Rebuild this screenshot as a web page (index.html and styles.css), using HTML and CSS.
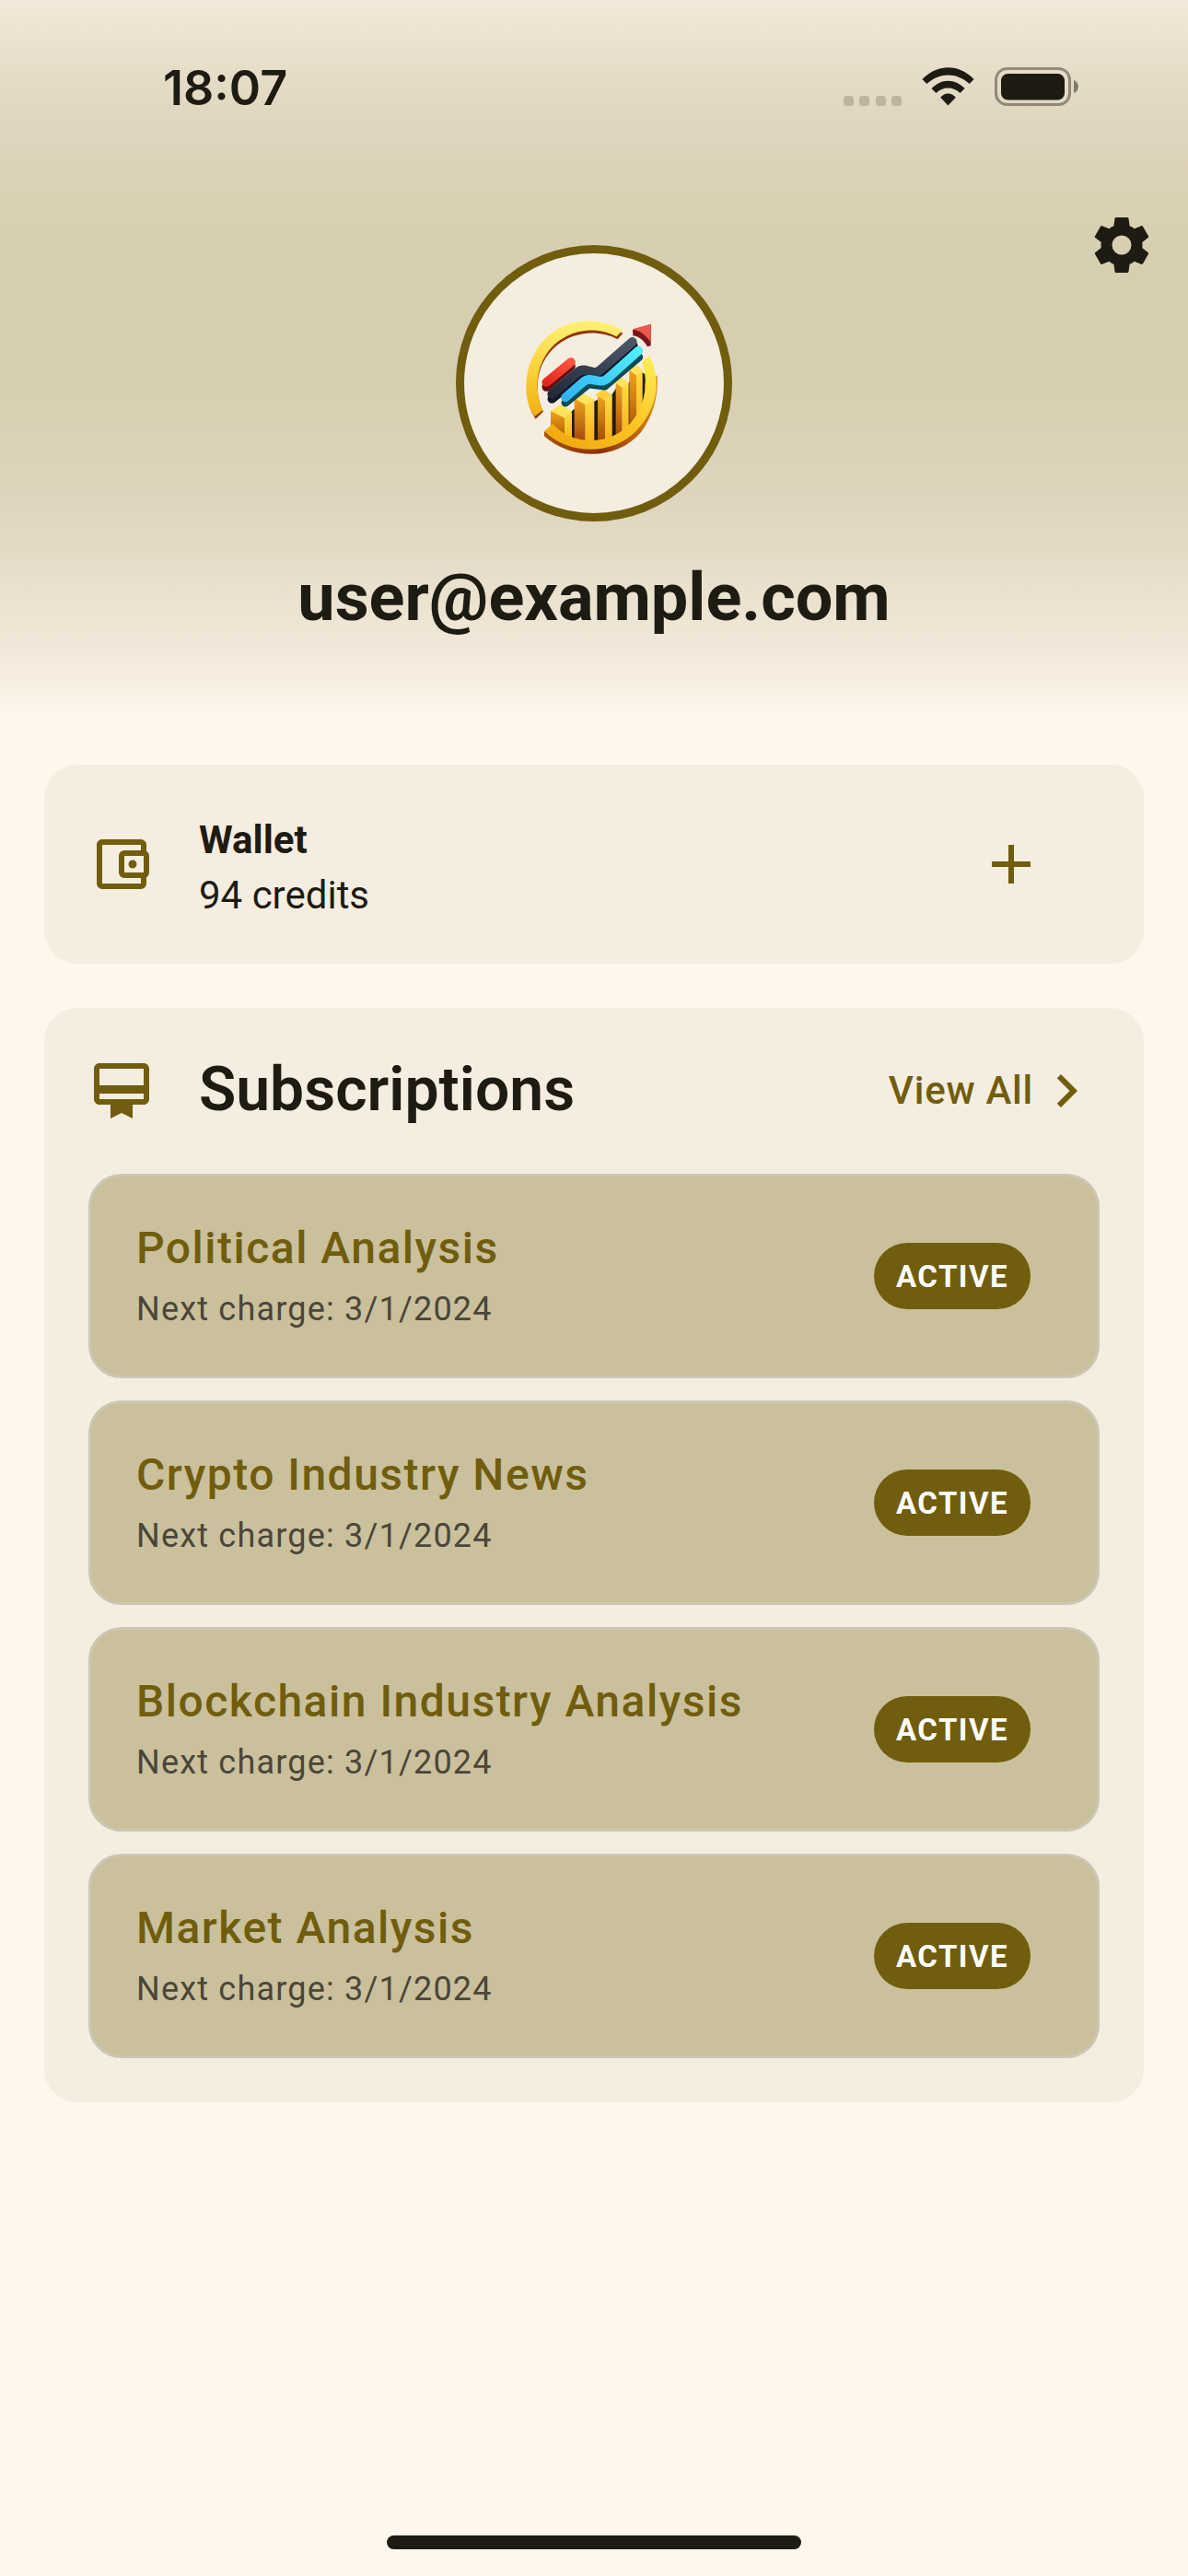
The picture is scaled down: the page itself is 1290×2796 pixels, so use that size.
FILE: index.html
```html
<!DOCTYPE html>
<html lang="en">
<head>
<meta charset="utf-8">
<title>Profile</title>
<link rel="stylesheet" href="styles.css">
</head>
<body>
<div class="screen">
  <header class="hero">
    <div class="status">
      <span class="clock">18:07</span>
      <div class="signals">
        <div class="dots"><i></i><i></i><i></i><i></i></div>
        <svg class="wifi" viewBox="0 0 170 124">
          <path d="M1 39C50 -12 120 -12 169 39L154 54C113 16 57 16 16 54Z"/>
          <path d="M31 69C63 36 107 36 139 69L124 84C102 62 68 62 46 84Z"/>
          <path d="M60 98C75 81 95 81 110 98L85 124Z"/>
        </svg>
        <svg class="battery" viewBox="0 0 92 42">
          <rect x="1.5" y="1.5" width="80" height="39" rx="12" fill="none" stroke="#1e1b13" stroke-opacity=".42" stroke-width="3"/>
          <rect x="7" y="7" width="69" height="28.5" rx="7.5" fill="#1e1b13"/>
          <path d="M86 14C92.500 16 92.500 26 86 28Z" fill="#1e1b13" opacity=".5"/>
        </svg>
      </div>
    </div>
    <div class="profile">
      <div class="avatar">
        <svg class="logo" viewBox="0 -24 630 624">
          <defs>
            <linearGradient id="ring" x1="0" y1="0" x2="0" y2="1"><stop offset="0" stop-color="#fff274"/><stop offset=".5" stop-color="#fbd13b"/><stop offset="1" stop-color="#f2b010"/></linearGradient>
            <linearGradient id="ring2" x1="1" y1="0" x2="0" y2="1"><stop offset="0" stop-color="#fff05a"/><stop offset=".45" stop-color="#fbc522"/><stop offset="1" stop-color="#efa50c"/></linearGradient>
            <linearGradient id="edge" x1="0" y1="0" x2="1" y2="0"><stop offset="0" stop-color="#a85408"/><stop offset=".5" stop-color="#8c2e05"/><stop offset="1" stop-color="#d98a0c"/></linearGradient>
            <linearGradient id="barL" x1="0" y1="0" x2="0" y2="1"><stop offset="0" stop-color="#f0a51a"/><stop offset="1" stop-color="#983a06"/></linearGradient>
            <linearGradient id="barR" x1="0" y1="0" x2="0" y2="1"><stop offset="0" stop-color="#ffdc42"/><stop offset="1" stop-color="#f5a911"/></linearGradient>
            <linearGradient id="navy" x1="1" y1="0" x2="0" y2="1"><stop offset="0" stop-color="#4c5669"/><stop offset="1" stop-color="#232b3b"/></linearGradient>
            <linearGradient id="cyan" x1="1" y1="0" x2="0" y2="1"><stop offset="0" stop-color="#52efff"/><stop offset="1" stop-color="#2fb4ee"/></linearGradient>
            <linearGradient id="red" x1="1" y1="0" x2="0" y2="1"><stop offset="0" stop-color="#fb5340"/><stop offset="1" stop-color="#e6261e"/></linearGradient>
            <clipPath id="disc"><path d="M90 200H500V300C500 400 425 478 310 478C250 478 205 455 168 422Z"/></clipPath>
          </defs>
          <path d="M409 125L392 145C330 112 245 118 186 172C128 226 116 310 150 380L125 404C85 350 85 240 140 168C200 90 310 65 409 125Z" fill="#8d3507"/>
          <path d="M408 116L388 136C330 103 245 108 186 162C128 216 116 306 148 376L121 396C82 340 84 240 135 168C195 85 305 58 408 116Z" fill="url(#ring)"/>
          <g clip-path="url(#disc)">
            <path d="M236 385L258 365V480H236ZM310 350L330 340V480H310ZM370 330L390 300V480H370ZM425 290L440 270V480H425ZM468 250L486 262V440H468Z" fill="#241b12"/>
            <path d="M174 378L219 400V500H174Z" fill="url(#barL)"/><path d="M219 400L243 380V500H219Z" fill="url(#barR)"/><path d="M174 378L206 357L243 380L219 400Z" fill="#ffe45c"/>
            <path d="M251 336L287 358V500H251Z" fill="url(#barL)"/><path d="M287 358L316 340V500H287Z" fill="url(#barR)"/><path d="M251 336L278 319L316 340L287 358Z" fill="#ffe45c"/>
            <path d="M327 326L351 344V500H327Z" fill="url(#barL)"/><path d="M351 344L374 326V500H351Z" fill="url(#barR)"/><path d="M318 326L345 307L374 326L351 344Z" fill="#ffd03c"/>
            <path d="M386 286L407 302V500H386Z" fill="url(#barL)"/><path d="M407 302L428 286V500H407Z" fill="url(#barR)"/><path d="M378 282L402 266L428 286L407 302Z" fill="#ffe45c"/>
            <path d="M430 244L453 262V500H430Z" fill="url(#barL)"/><path d="M453 262L473 242V500H453Z" fill="url(#barR)"/><path d="M424 240L446 224L473 242L453 262Z" fill="#ffe45c"/>
          </g>
          <path d="M153 444V460C240 540 390 540 468 448C524 372 524 290 520 262L480 290C500 400 400 500 290 485Z" fill="url(#edge)"/>
          <path d="M496 198L472 218C510 340 440 470 310 474C255 475 210 455 181 420L153 444C230 522 376 525 454 442C528 362 532 275 496 198Z" fill="url(#ring2)"/>
          <g fill="none" stroke-linejoin="round" stroke-linecap="round">
            <path d="M160 300L240 232" stroke="#611013" stroke-width="29"/>
            <path d="M160 285L240 219" stroke="url(#red)" stroke-width="29"/>
            <path d="M178 339L277 258L325 264L443 165" stroke="#101827" stroke-width="29"/>
            <path d="M178 323L262 252Q276 241 294 247L315 252Q326 253 335 245L440 153" stroke="url(#navy)" stroke-width="30"/>
            <path d="M222 351L297 290L350 297L461 203" stroke="#0b4c59" stroke-width="27"/>
            <path d="M222 334L280 284Q291 274 305 276L335 281Q348 282 360 272L460 182" stroke="url(#cyan)" stroke-width="29"/>
          </g>
          <path d="M441 113L501 95L500 166L489 169C477 148 463 136 442 133Z" fill="#7b151b"/>
          <path d="M441 112L501 95L499 154C485 132 467 118 441 112Z" fill="#ed594e"/>
        </svg>
      </div>
      <svg class="icon gear" viewBox="0 0 24 24"><path d="M12,15.5A3.5,3.5 0 0,1 8.5,12A3.5,3.5 0 0,1 12,8.5A3.5,3.5 0 0,1 15.5,12A3.5,3.5 0 0,1 12,15.5M19.43,12.97C19.47,12.65 19.5,12.33 19.5,12C19.5,11.67 19.47,11.34 19.43,11L21.54,9.37C21.73,9.22 21.78,8.95 21.66,8.73L19.66,5.27C19.54,5.05 19.27,4.96 19.05,5.05L16.56,6.05C16.04,5.66 15.5,5.32 14.87,5.07L14.5,2.42C14.46,2.18 14.25,2 14,2H10C9.75,2 9.54,2.18 9.5,2.42L9.13,5.07C8.5,5.32 7.96,5.66 7.44,6.05L4.95,5.05C4.73,4.96 4.46,5.05 4.34,5.27L2.34,8.73C2.21,8.95 2.27,9.22 2.46,9.37L4.57,11C4.53,11.34 4.5,11.67 4.5,12C4.5,12.33 4.53,12.65 4.57,12.97L2.46,14.63C2.27,14.78 2.21,15.05 2.34,15.27L4.34,18.73C4.46,18.95 4.73,19.03 4.95,18.95L7.44,17.94C7.96,18.34 8.5,18.68 9.13,18.93L9.5,21.58C9.54,21.82 9.75,22 10,22H14C14.25,22 14.46,21.82 14.5,21.58L14.87,18.93C15.5,18.67 16.04,18.34 16.56,17.94L19.05,18.95C19.27,19.03 19.54,18.95 19.66,18.73L21.66,15.27C21.78,15.05 21.73,14.78 21.54,14.63L19.43,12.97Z"/></svg>
    </div>
    <h1 class="email">user@example.com</h1>
  </header>

  <main class="content">
    <section class="card wallet">
      <svg class="icon" viewBox="0 0 24 24"><path d="M5,3C3.89,3 3,3.9 3,5V19A2,2 0 0,0 5,21H19A2,2 0 0,0 21,19V16.72C21.59,16.37 22,15.74 22,15V9C22,8.26 21.59,7.63 21,7.28V5A2,2 0 0,0 19,3H5M5,5H19V7H13A2,2 0 0,0 11,9V15A2,2 0 0,0 13,17H19V19H5V5M13,9H20V15H13V9M16,10.5A1.5,1.5 0 0,0 14.5,12A1.5,1.5 0 0,0 16,13.5A1.5,1.5 0 0,0 17.5,12A1.5,1.5 0 0,0 16,10.5Z"/></svg>
      <div class="wallet-text">
        <div class="wallet-title">Wallet</div>
        <div>94 credits</div>
      </div>
      <svg class="icon add" viewBox="0 0 24 24"><path d="M19,13H13V19H11V13H5V11H11V5H13V11H19V13Z"/></svg>
    </section>

    <section class="card subs">
      <div class="subs-head">
        <svg class="icon" viewBox="0 0 24 24"><path d="M20,10H4V4H20M20,15H4V13H20M20,2H4C2.89,2 2,2.89 2,4V15C2,16.11 2.89,17 4,17H8V22L12,20L16,22V17H20C21.11,17 22,16.11 22,15V4C22,2.89 21.11,2 20,2Z"/></svg>
        <h2 class="subs-title">Subscriptions</h2>
        <span class="view-all">View All</span>
        <svg class="icon chevron" viewBox="0 0 24 24"><path d="M8.59,16.58L13.17,12L8.59,7.41L10,6L16,12L10,18L8.59,16.58Z"/></svg>
      </div>
      <div class="list">
        <article class="item">
          <div><h3 class="name">Political Analysis</h3><p class="charge">Next charge: 3/1/2024</p></div>
          <span class="badge">ACTIVE</span>
        </article>
        <article class="item">
          <div><h3 class="name">Crypto Industry News</h3><p class="charge">Next charge: 3/1/2024</p></div>
          <span class="badge">ACTIVE</span>
        </article>
        <article class="item">
          <div><h3 class="name">Blockchain Industry Analysis</h3><p class="charge">Next charge: 3/1/2024</p></div>
          <span class="badge">ACTIVE</span>
        </article>
        <article class="item">
          <div><h3 class="name">Market Analysis</h3><p class="charge">Next charge: 3/1/2024</p></div>
          <span class="badge">ACTIVE</span>
        </article>
      </div>
    </section>
  </main>
  <div class="home-indicator"></div>
</div>
</body>
</html>
```
FILE: styles.css
```css
* { box-sizing: border-box; margin: 0; padding: 0; }

body {
  background: #fff7ed;
  color: #1e1b13;
  font-family: Roboto, sans-serif;
}

.screen {
  width: 1290px;
  height: 2796px;
  display: flex;
  flex-direction: column;
}

.hero {
  height: 782px;
  background: linear-gradient(#f2e9da 0, #e8e0cc 60px, #e2d8c2 115px, #dfd4bd 155px, #dcd2b7 190px, #d9d0b3 240px, #d7cdb0 310px, #d7cdb0 395px, #dad1b5 460px, #dfd5be 540px, #e4dbc7 600px, #eae1cf 645px, #f1e8d9 700px, #f8efe3 742px, #fff6ec 778px, #fff7ed 782px);
}

.status {
  height: 162px;
  padding: 0 118px 0 177px;
  display: flex;
  justify-content: space-between;
}

.clock {
  padding-top: 66px;
  font: 600 52px/60px Inter, sans-serif;
}

.signals {
  height: 42px;
  margin-top: 73px;
  display: flex;
  align-items: flex-start;
}

.dots {
  display: flex;
  gap: 6.5px;
  margin: 30.5px 22px 0 0;
}

.dots i {
  width: 11px;
  height: 11px;
  border-radius: 3.5px;
  background: #bdb5a0;
}

.wifi {
  width: 57px;
  height: 41.5px;
  margin-right: 22px;
  fill: #1e1b13;
}

.battery { width: 92px; height: 42px; }

.icon {
  width: 72px;
  height: 72px;
  flex: none;
  fill: #705d0d;
}

.profile {
  padding: 68px 36px 0;
  display: grid;
  grid-template-columns: 1fr 300px 1fr;
}

.avatar {
  grid-column: 2;
  height: 300px;
  margin-top: 36px;
  border: 9px solid #705d0d;
  border-radius: 50%;
  background: #f5ede0;
  display: flex;
  align-items: center;
  justify-content: center;
}

.logo { width: 210px; height: 208px; flex: none; }

.gear { justify-self: end; fill: #1e1b13; }

.email {
  margin-top: 41px;
  text-align: center;
  font-size: 72px;
  font-weight: 700;
  line-height: 84px;
}

.content {
  flex: 1;
  padding: 48px;
  display: flex;
  flex-direction: column;
  gap: 48px;
}

.card {
  border-radius: 36px;
  background: #f5ede0;
  padding: 0 48px;
}

.wallet {
  height: 216px;
  display: flex;
  align-items: center;
}

.wallet-text {
  flex: 1;
  margin-left: 48px;
  padding-top: 7px;
  font-size: 42px;
  line-height: 60px;
}

.wallet-title { font-weight: 700; }

.add { margin-right: 60px; }

.subs { padding-bottom: 48px; }

.subs-head {
  height: 179px;
  margin-bottom: 1px;
  display: flex;
  align-items: center;
}

.subs-title {
  flex: 1;
  margin-left: 48px;
  font-size: 66px;
  font-weight: 600;
  line-height: 82px;
  padding-bottom: 2px;
}

.view-all {
  color: #705d0d;
  font-size: 42px;
  font-weight: 500;
  letter-spacing: .75px;
}

.list {
  display: flex;
  flex-direction: column;
  gap: 24px;
}

.item {
  height: 222px;
  padding: 0 72px 0 49px;
  border: 3px solid #cdc6b4;
  border-radius: 36px;
  background: #cac09c;
  display: flex;
  align-items: center;
  justify-content: space-between;
}

.name {
  color: #705d0d;
  font-size: 48px;
  font-weight: 500;
  line-height: 72px;
  letter-spacing: 1.5px;
}

.charge {
  color: #4b4639;
  font-size: 36px;
  line-height: 60px;
  letter-spacing: 1.2px;
}

.badge {
  width: 170px;
  height: 72px;
  border-radius: 36px;
  background: #705d0d;
  color: #fff;
  font-size: 33px;
  font-weight: 700;
  line-height: 73px;
  letter-spacing: 1.5px;
  text-align: center;
}

.home-indicator {
  width: 450px;
  height: 15px;
  margin: 0 auto 29px;
  border-radius: 8px;
  background: #1e1b13;
}
```
